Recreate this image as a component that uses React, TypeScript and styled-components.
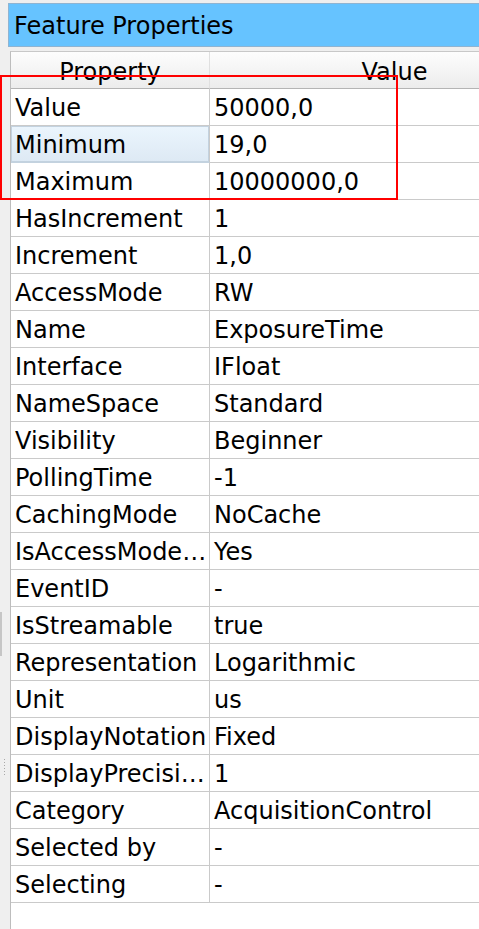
import React from "react";
import styled, { createGlobalStyle } from "styled-components";

const Global = createGlobalStyle`
  html, body { margin: 0; padding: 0; background: #efefef; }
  body { font-family: "DejaVu Sans", "Liberation Sans", sans-serif; color: #000; overflow: hidden; }
  #root { height: 929px; }
`;

const Root = styled.div`
  position: relative;
  width: 479px;
  height: 929px;
  display: flex;
  flex-direction: column;
  overflow: hidden;
  background: #efefef;
`;

const TitleBar = styled.div`
  margin: 3px 0 0 8px;
  height: 41px;
  background: #66c3ff;
  border: 1px solid #8fb4d2;
  border-right: none;
  display: flex;
  align-items: center;
  padding: 1px 0 0 5px;
  box-sizing: content-box;
  font-size: 24px;
  white-space: nowrap;
`;

const Body = styled.div`
  flex: 1;
  display: flex;
  margin-top: 4px;
  min-height: 0;
`;

const Gutter = styled.div`
  width: 10px;
  flex: none;
  display: flex;
  flex-direction: column;
`;

const Handle = styled.div`
  margin-top: 561px;
  width: 2px;
  height: 44px;
  background: #c6c6c6;
`;

const Grip = styled.div`
  margin: 103px 0 0 4px;
  width: 1px;
  height: 18px;
  background-image: linear-gradient(#a8a8a8 50%, transparent 50%);
  background-size: 1px 3px;
`;

const Table = styled.div`
  flex: 1;
  background: #fff;
  border-left: 1px solid #bdbdbd;
  border-top: 1px solid #c8c8c8;
  overflow: hidden;
  display: grid;
  grid-template-columns: 199px 369px;
  grid-template-rows: 37px;
  grid-auto-rows: 37px;
  align-content: start;
`;

const HeadCell = styled.div<{ $last?: boolean }>`
  height: 37px;
  box-sizing: border-box;
  background: linear-gradient(#fdfdfd, #ececec);
  border-bottom: 1px solid #b4b4b4;
  border-right: ${(p) => (p.$last ? "none" : "1px solid #e0e0e0")};
  display: flex;
  align-items: center;
  justify-content: center;
  padding-top: 3px;
  font-size: 24px;
  white-space: nowrap;
`;

const Cell = styled.div<{ $selected?: boolean; $key?: boolean }>`
  box-sizing: border-box;
  height: 37px;
  padding: 2px 0 0 4px;
  display: flex;
  align-items: center;
  font-size: 24px;
  white-space: nowrap;
  overflow: hidden;
  border-bottom: 1px solid #cacaca;
  border-right: ${(p) => (p.$key ? "1px solid #cacaca" : "none")};
  background: ${(p) =>
    p.$selected ? "linear-gradient(#ebf5fd, #dde9f4)" : "#fff"};
  ${(p) =>
    p.$selected
      ? "box-shadow: inset 0 0 0 1px #c3d2df; border-bottom-color: #c3d2df;"
      : ""}
`;

const Highlight = styled.div`
  position: absolute;
  left: 0;
  top: 75px;
  width: 398px;
  height: 125px;
  box-sizing: border-box;
  border: 2px solid #ff0000;
  pointer-events: none;
`;

const rows: [string, string][] = [
  ["Value", "50000,0"],
  ["Minimum", "19,0"],
  ["Maximum", "10000000,0"],
  ["HasIncrement", "1"],
  ["Increment", "1,0"],
  ["AccessMode", "RW"],
  ["Name", "ExposureTime"],
  ["Interface", "IFloat"],
  ["NameSpace", "Standard"],
  ["Visibility", "Beginner"],
  ["PollingTime", "-1"],
  ["CachingMode", "NoCache"],
  ["IsAccessMode…", "Yes"],
  ["EventID", "-"],
  ["IsStreamable", "true"],
  ["Representation", "Logarithmic"],
  ["Unit", "us"],
  ["DisplayNotation", "Fixed"],
  ["DisplayPrecisi…", "1"],
  ["Category", "AcquisitionControl"],
  ["Selected by", "-"],
  ["Selecting", "-"],
];

export default function App() {
  return (
    <Root>
      <Global />
      <TitleBar>Feature Properties</TitleBar>
      <Body>
        <Gutter>
          <Handle />
          <Grip />
        </Gutter>
        <Table>
          <HeadCell>Property</HeadCell>
          <HeadCell $last>Value</HeadCell>
          {rows.map(([k, v]) => (
            <React.Fragment key={k}>
              <Cell $key $selected={k === "Minimum"}>
                {k}
              </Cell>
              <Cell>{v}</Cell>
            </React.Fragment>
          ))}
        </Table>
      </Body>
      <Highlight />
    </Root>
  );
}
